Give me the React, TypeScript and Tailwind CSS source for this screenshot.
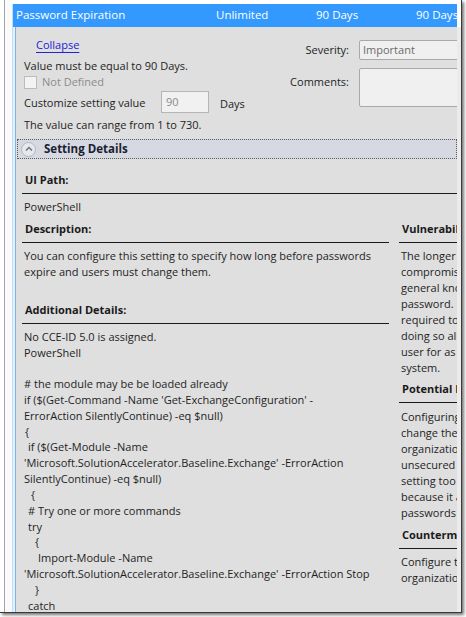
import React from 'react';

const codeLines: { text: string; indent: number }[] = [
  { text: '# the module may be be loaded already', indent: 0 },
  { text: "if ($(Get-Command -Name 'Get-ExchangeConfiguration' -", indent: 0 },
  { text: 'ErrorAction SilentlyContinue) -eq $null)', indent: 0 },
  { text: '{', indent: 1 },
  { text: 'if ($(Get-Module -Name', indent: 4 },
  { text: "'Microsoft.SolutionAccelerator.Baseline.Exchange' -ErrorAction", indent: 0 },
  { text: 'SilentlyContinue) -eq $null)', indent: 0 },
  { text: '{', indent: 7 },
  { text: '# Try one or more commands', indent: 4 },
  { text: 'try', indent: 4 },
  { text: '{', indent: 11 },
  { text: 'Import-Module -Name', indent: 14 },
  { text: "'Microsoft.SolutionAccelerator.Baseline.Exchange' -ErrorAction Stop", indent: 0 },
  { text: '}', indent: 11 },
  { text: 'catch', indent: 4 },
];

const vulnerability = [
  'The longer a password exists the higher the likelihood',
  'compromised by a brute force attack, by an attacker',
  'general knowledge about the user, or by the user sharing',
  'password. Configuring the Maximum password age setting',
  'required to change their passwords is a major security',
  'doing so allows a compromised password to be used',
  'user for as long as the valid user is authorized access',
  'system.',
];

const impact = [
  'Configuring the Maximum password age setting too',
  'change their passwords very often. This can reduce',
  'organization, because users might write their',
  'unsecured location or lose them. Configuring this',
  'setting too high can also reduce security',
  'because it allows more time for attackers to crack',
  'passwords of user accounts.',
];

const countermeasure = [
  'Configure the Maximum password age setting to a value',
  "organization's business requirements.",
];

function SectionHeader({ children }: { children: React.ReactNode }) {
  return (
    <div className="pl-[3px] pb-[5px] border-b border-[#1a1a1a] font-bold text-[#1a1a1a] whitespace-nowrap">
      {children}
    </div>
  );
}

function Lines({ lines }: { lines: string[] }) {
  return (
    <div className="pl-[2px] pt-[5px] whitespace-nowrap">
      {lines.map((l, i) => (
        <div key={i}>{l}</div>
      ))}
    </div>
  );
}

export default function App() {
  return (
    <div className="w-[466px] h-[617px] bg-white overflow-hidden font-['Open_Sans',sans-serif] text-[11px] leading-[16px] text-[#1e1e1e]">
      <div className="w-[462px] h-[613px] flex border-r border-b border-[#3a3a3a] shadow-[2px_2px_3px_rgba(0,0,0,0.55)]">
        {/* left gutter */}
        <div className="w-[12px] shrink-0 pl-[4px]">
          <div className="h-full border-l border-[#a4a4a4] bg-[#fafafa]" />
        </div>

        <div className="flex-1 min-w-0 flex flex-col pt-[4px]">
          {/* header row */}
          <div className="flex h-[23px] shrink-0">
            <div className="w-[1px] bg-[#bfe0f8]" />
            <div className="flex-1 bg-[#3399ff] text-white grid grid-cols-[203px_100px_100px_1fr] items-center pb-[2px] text-[11.5px] whitespace-nowrap overflow-hidden">
              <div className="pl-[3px]">Password Expiration</div>
              <div>Unlimited</div>
              <div>90 Days</div>
              <div>90 Days</div>
            </div>
            <div className="w-[4px] bg-white" />
          </div>

          {/* body */}
          <div className="flex-1 min-h-0 flex">
            <div className="w-[4px] shrink-0 flex">
              <div className="w-[1px] bg-[#bfe0f8]" />
              <div className="w-[2px] bg-[#e2f1fc]" />
              <div className="w-[1px] bg-[#7fb1e4]" />
            </div>

            <div className="flex-1 min-w-0 bg-[#dfdfdf] overflow-hidden">
              {/* top settings */}
              <div className="flex items-start">
                <div className="w-[274px] shrink-0 pl-[8px] pt-[10px] whitespace-nowrap">
                  <div className="pl-[12px]">
                    <span className="text-[#2222d6] underline underline-offset-[3px]">Collapse</span>
                  </div>
                  <div className="mt-[5px]">Value must be equal to 90 Days.</div>
                  <div className="flex items-center h-[16px]">
                    <div className="w-[13px] h-[13px] border border-[#bcbcbc] bg-[#f3f3f3]" />
                    <span className="ml-[5px] text-[#8c8c8c]">Not Defined</span>
                  </div>
                  <div className="mt-[1px] flex items-center h-[22px]">
                    <div className="w-[137px] pt-[2px]">Customize setting value</div>
                    <div className="w-[48px] h-[22px] border border-[#b5b5b5] bg-[#f1f1f1] pl-[4px] flex items-center text-[#8a8a8a]">
                      90
                    </div>
                    <div className="ml-[11px] pt-[3px]">Days</div>
                  </div>
                  <div className="mt-[4px]">The value can range from 1 to 730.</div>
                </div>

                <div className="flex-1 min-w-0 pt-[13px] grid grid-cols-[59px_1fr] content-start gap-x-[10px] gap-y-[8px] whitespace-nowrap">
                  <div className="text-right h-[20px] flex items-center justify-end">Severity:</div>
                  <div className="w-[160px] h-[20px] border border-[#a9a9a9] rounded-[2px] bg-[#f0f0f0] pl-[3px] flex items-center text-[#6b6b6b]">
                    Important
                  </div>
                  <div className="text-right pt-[6px]">Comments:</div>
                  <div className="w-[160px] h-[39px] border border-[#a9a9a9] rounded-[2px] bg-[#f0f0f0]" />
                </div>
              </div>

              {/* Setting Details bar */}
              <div className="mt-[6px] ml-[1px] h-[20px] border border-dotted border-[#5a5a5a] bg-[#d6d9e1] flex items-center">
                <div className="ml-[3px] w-[15px] h-[15px] rounded-full border border-[#b3b7c0] bg-[#e6e8ec] flex items-center justify-center">
                  <svg width="8" height="6" viewBox="0 0 8 6">
                    <path d="M1 4.5 L4 1.5 L7 4.5" fill="none" stroke="#6b6f78" strokeWidth="1.4" />
                  </svg>
                </div>
                <span className="ml-[8px] font-bold text-[11.5px] text-[#1b2130]">Setting Details</span>
              </div>

              {/* details */}
              <div className="ml-[6px] mt-[13px]">
                <SectionHeader>UI Path:</SectionHeader>
                <Lines lines={['PowerShell']} />

                <div className="mt-[6px] flex">
                  <div className="w-[367px] shrink-0">
                    <SectionHeader>Description:</SectionHeader>
                    <Lines
                      lines={[
                        'You can configure this setting to specify how long before passwords',
                        'expire and users must change them.',
                      ]}
                    />
                    <div className="mt-[22px]">
                      <SectionHeader>Additional Details:</SectionHeader>
                      <div className="pl-[2px] pt-[5px] whitespace-nowrap">
                        <div>No CCE-ID 5.0 is assigned.</div>
                        <div>PowerShell</div>
                        <div className="h-[15px]" />
                        {codeLines.map((l, i) => (
                          <div key={i} className="leading-[15.85px]" style={{ paddingLeft: l.indent }}>
                            {l.text}
                          </div>
                        ))}
                      </div>
                    </div>
                  </div>

                  <div className="ml-[10px] flex-1 min-w-0 overflow-hidden">
                    <SectionHeader>Vulnerability:</SectionHeader>
                    <Lines lines={vulnerability} />
                    <div className="mt-[5px]">
                      <SectionHeader>Potential Impact:</SectionHeader>
                    </div>
                    <div className="pt-[1px]">
                      <Lines lines={impact} />
                    </div>
                    <div className="mt-[6px]">
                      <SectionHeader>Countermeasure:</SectionHeader>
                    </div>
                    <Lines lines={countermeasure} />
                  </div>
                </div>
              </div>
            </div>

            <div className="w-[4px] shrink-0 bg-[#ebebeb]" />
          </div>
        </div>
      </div>
    </div>
  );
}
